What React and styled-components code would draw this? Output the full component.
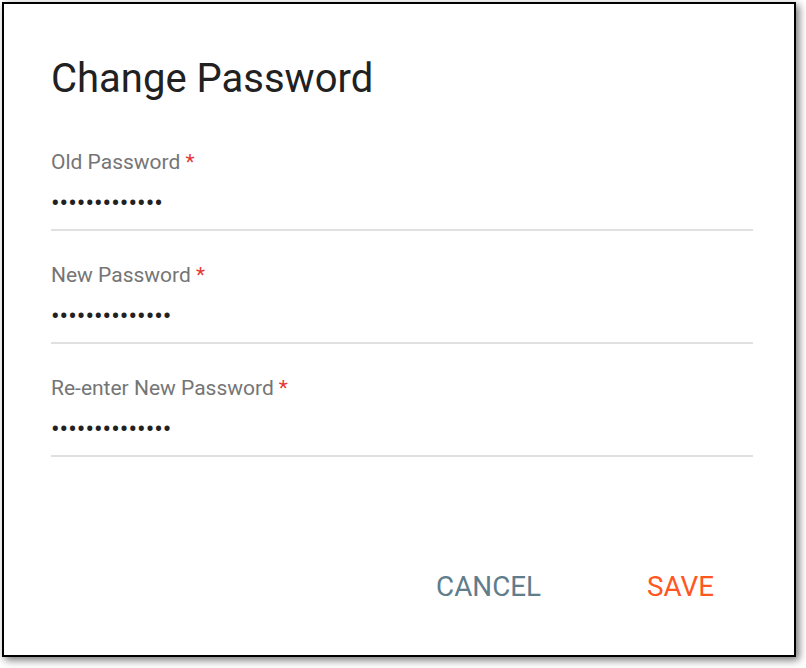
import React from "react";
import styled, { createGlobalStyle } from "styled-components";

const GlobalStyle = createGlobalStyle`
    body {
        margin: 0;
        background: #ffffff;
        font-family: Roboto, "Liberation Sans", sans-serif;
    }
`

const Page = styled.div`
    width: 806px;
    height: 668px;
    padding: 2px 0 0 2px;
    box-sizing: border-box;
`

const Dialog = styled.div`
    width: 794px;
    height: 655px;
    box-sizing: border-box;
    border: 2px solid #000;
    background: #fff;
    box-shadow: 3px 3px 8px rgba(0, 0, 0, 0.55);
    display: flex;
    flex-direction: column;
    padding: 51px 41px 41px 47px;
`

const Title = styled.h1`
    margin: 0 0 45px;
    font-size: 40px;
    font-weight: 400;
    line-height: 48px;
    color: #212121;
`

const Fields = styled.div`
    display: flex;
    flex-direction: column;
    gap: 30px;
`

const Field = styled.label`
    display: flex;
    flex-direction: column;
`

const Label = styled.span`
    font-size: 21px;
    line-height: 28px;
    color: #757575;
`

const Required = styled.span`
    color: #e53935;
    margin-left: 5px;
`

const Input = styled.input`
    border: none;
    border-bottom: 2px solid #e0e0e0;
    outline: none;
    padding: 11px 0 10px;
    margin: 0;
    font-family: inherit;
    font-size: 25.5px;
    line-height: 32px;
    color: #212121;
    background: transparent;
`

const Actions = styled.div`
    margin-top: auto;
    display: flex;
    justify-content: flex-end;
    gap: 58px;
    padding-right: 15px;
`

const Button = styled.button`
    border: none;
    background: transparent;
    padding: 0 24px;
    height: 56px;
    font-family: inherit;
    font-size: 27.8px;
    font-weight: 400;
    text-transform: uppercase;
    color: ${props => props.primary ? "#ff5722" : "#607d8b"};
    cursor: pointer;
`

const fields = [
    { label: "Old Password", value: "aaaaaaaaaaaaa" },
    { label: "New Password", value: "aaaaaaaaaaaaaa" },
    { label: "Re-enter New Password", value: "aaaaaaaaaaaaaa" },
]

const App = () => {
    return (
        <Page>
            <GlobalStyle/>
            <Dialog>
                <Title>Change Password</Title>
                <Fields>
                    {fields.map((f) => (
                        <Field key={f.label}>
                            <Label>{f.label}<Required>*</Required></Label>
                            <Input type="password" defaultValue={f.value} readOnly/>
                        </Field>
                    ))}
                </Fields>
                <Actions>
                    <Button>Cancel</Button>
                    <Button primary>Save</Button>
                </Actions>
            </Dialog>
        </Page>
    )
}

export default App;
